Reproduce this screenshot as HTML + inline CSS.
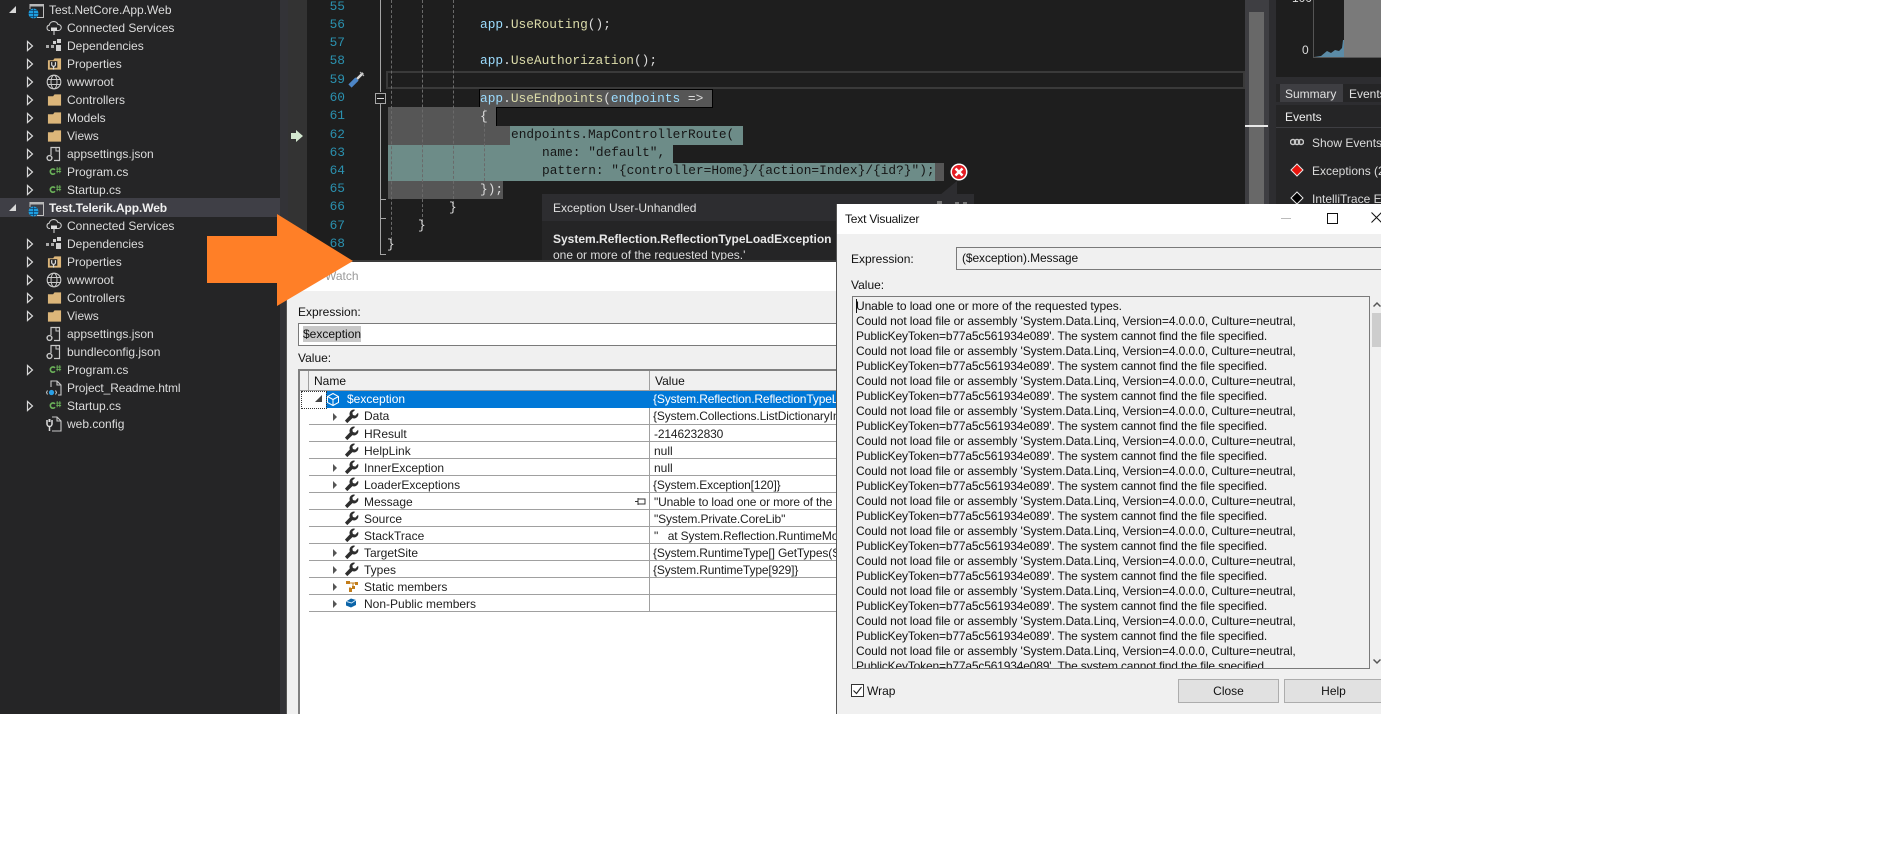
<!DOCTYPE html>
<html><head><meta charset="utf-8"><style>
html,body{margin:0;padding:0;background:#fff;width:1888px;height:854px;overflow:hidden}
#root{position:absolute;left:0;top:0;width:1381px;height:714px;overflow:hidden;background:#1e1e1e;font-family:"Liberation Sans",sans-serif;font-size:12px}
.a{position:absolute}
.t{position:absolute;white-space:pre;line-height:16px;height:16px}
.s{color:#dcdcdc}
.c{position:absolute;white-space:pre;font-family:"Liberation Mono",monospace;font-size:12.83px;line-height:18px;height:18px;color:#dcdcdc}
.n{position:absolute;left:315px;width:30px;text-align:right;font-family:"Liberation Mono",monospace;font-size:12.83px;line-height:18px;color:#2b91af}
.b{color:#9cdcfe}.y{color:#dcdcaa}.k{color:#161616}
.i{position:absolute}
.d{color:#1e1e1e}
.w{letter-spacing:-.14px}
.v{position:absolute;left:856px;white-space:pre;line-height:15px;color:#111;font-size:12px}
.v:nth-child(odd){letter-spacing:-.09px}
.v:nth-child(even){letter-spacing:-.17px}
.g{position:absolute;left:309px;width:527px;height:16px;border-bottom:1px solid #a0a0a0}
.dash{position:absolute;top:0;width:0;border-left:1px dashed #6a6a6a}
</style></head><body>
<svg width="0" height="0" style="position:absolute"><defs>
<symbol id="ex" viewBox="0 0 8 12"><path d="M1.500 1.500L6.500 6 1.500 10.500z" fill="none" stroke="#d8d8d8" stroke-width="1.200"/></symbol>
<symbol id="folder" viewBox="0 0 16 14"><path d="M1 3V13H15V1H8L6.500 3z" fill="#dcb67a"/></symbol>
<symbol id="prop" viewBox="0 0 16 14"><path d="M1 3V13H15V1H8L6.500 3z" fill="#dcb67a"/><path d="M3 4h8v7H3z" fill="#252526"/><path d="M5 5v2.500a2 2 0 0 0 4 0V5M7 9v4" fill="none" stroke="#ddd" stroke-width="1.300"/></symbol>
<symbol id="cs" viewBox="0 0 16 12"><path d="M8 4.200A3 3 0 1 0 8 8" fill="none" stroke="#6cb35a" stroke-width="1.800"/><path d="M10.500 1v7M13.500 1v7M9.500 3.200h5.500M9.500 6h5.500" stroke="#6cb35a" stroke-width="1"/></symbol>
<symbol id="json" viewBox="0 0 16 16"><path d="M5 9V1.500h9M13.500 1.500V14.500H8" fill="none" stroke="#c8c8c8" stroke-width="1.200"/><circle cx="3.500" cy="12" r="2.400" fill="none" stroke="#c8c8c8" stroke-width="1.400"/><path d="M10 2v3h4" fill="none" stroke="#c8c8c8"/></symbol>
<symbol id="globe" viewBox="0 0 16 16"><circle cx="8" cy="8" r="6.800" fill="none" stroke="#c8c8c8" stroke-width="1.100"/><ellipse cx="8" cy="8" rx="3" ry="6.800" fill="none" stroke="#c8c8c8"/><path d="M1 5.500h14M1 10.500h14" stroke="#c8c8c8"/></symbol>
<symbol id="cloud" viewBox="0 0 16 14"><path d="M4 9.500H3.200a2.700 2.700 0 0 1 0-5.300 4.600 4.600 0 0 1 8.800-.7 3 3 0 0 1 .5 6H11" fill="none" stroke="#c8c8c8" stroke-width="1.100"/><path d="M5.500 7h5v2.500h-5zM8 9.500V14" fill="#ddd" stroke="#ddd"/></symbol>
<symbol id="deps" viewBox="0 0 16 14"><path d="M0 6h3v3H0zM5 6h3v3H5z" fill="#aaa"/><path d="M7 2h3v3H7zM11 0h4v4h-4zM10 6h5v6h-5z" fill="#d0d0d0"/></symbol>
<symbol id="proj" viewBox="0 0 16 16"><path d="M2 6V1.500H15.500V14.500H9" fill="none" stroke="#c0c0c0" stroke-width="1"/><path d="M2 1h14v2.500H2z" fill="#b8b8b8"/><circle cx="5.500" cy="10.500" r="5" fill="#1e9fe0"/><path d="M.5 10.500h10M5.500 5.500v10M2 7.500h7M2 13.500h7" stroke="#10406a" stroke-width=".8"/></symbol>
<symbol id="html" viewBox="0 0 16 16"><path d="M5 7V1h6l4 4v10H12M11 1v4h4" fill="none" stroke="#c8c8c8" stroke-width="1.100"/><circle cx="5.500" cy="12.500" r="2.600" fill="#29a0e6"/><path d="M1.500 10.500l-1 2 1 2M9.500 10.500l1 2-1 2" stroke="#c8c8c8" fill="none"/></symbol>
<symbol id="cfg" viewBox="0 0 16 16"><path d="M6 1h5l4 4v10H6M11 1v4h4" fill="none" stroke="#c8c8c8" stroke-width="1.100"/><path d="M1 4v4a2.500 2.500 0 0 0 5 0V4M3.500 10v5" fill="none" stroke="#ddd" stroke-width="1.500"/><path d="M2.500 6h2V3h-2z" fill="#ddd"/></symbol>
<symbol id="wr" viewBox="0 0 16 16"><path d="M15 4l-3 3-2.500-.6L8.900 3.900l3-3A4.500 4.500 0 0 0 6.200 6.800L1 12.400 3.500 15l5.500-5.300A4.500 4.500 0 0 0 15 4z" fill="#2e2e2e"/></symbol>
<symbol id="tri" viewBox="0 0 8 12"><path d="M2 2L6 6 2 10z" fill="#555"/></symbol>
</defs></svg>
<div id="root">
<!-- sidebar -->
<div class="a" style="left:0;top:0;width:280px;height:714px;background:#252526"></div>
<div class="a" style="left:280px;top:0;width:8px;height:714px;background:#333337"></div>
<div class="a" style="left:288px;top:0;width:19px;height:714px;background:#333333"></div>
<div class="a" style="left:0;top:198px;width:280px;height:19px;background:#3f3f46"></div>

<svg class="i" style="left:8px;top:5px" width="10" height="10"><path d="M8 1V8H1z" fill="#d8d8d8"/></svg>
<svg class="i" style="left:28px;top:3px" width="16" height="16"><use href="#proj"/></svg><div class="t" style="left:49px;top:2px;color:#dcdcdc;font-size:12px">Test.NetCore.App.Web</div>
<svg class="i" style="left:46px;top:21px" width="16" height="14"><use href="#cloud"/></svg><div class="t s" style="left:67px;top:20px">Connected Services</div>
<svg class="i" style="left:26px;top:40px" width="8" height="12"><use href="#ex"/></svg><svg class="i" style="left:46px;top:39px" width="16" height="14"><use href="#deps"/></svg><div class="t s" style="left:67px;top:38px">Dependencies</div>
<svg class="i" style="left:26px;top:58px" width="8" height="12"><use href="#ex"/></svg><svg class="i" style="left:47px;top:57px" width="15" height="14"><use href="#prop"/></svg><div class="t s" style="left:67px;top:56px">Properties</div>
<svg class="i" style="left:26px;top:76px" width="8" height="12"><use href="#ex"/></svg><svg class="i" style="left:46px;top:74px" width="16" height="16"><use href="#globe"/></svg><div class="t s" style="left:67px;top:74px">wwwroot</div>
<svg class="i" style="left:26px;top:94px" width="8" height="12"><use href="#ex"/></svg><svg class="i" style="left:47px;top:93px" width="15" height="14"><use href="#folder"/></svg><div class="t s" style="left:67px;top:92px">Controllers</div>
<svg class="i" style="left:26px;top:112px" width="8" height="12"><use href="#ex"/></svg><svg class="i" style="left:47px;top:111px" width="15" height="14"><use href="#folder"/></svg><div class="t s" style="left:67px;top:110px">Models</div>
<svg class="i" style="left:26px;top:130px" width="8" height="12"><use href="#ex"/></svg><svg class="i" style="left:47px;top:129px" width="15" height="14"><use href="#folder"/></svg><div class="t s" style="left:67px;top:128px">Views</div>
<svg class="i" style="left:26px;top:148px" width="8" height="12"><use href="#ex"/></svg><svg class="i" style="left:46px;top:146px" width="16" height="16"><use href="#json"/></svg><div class="t s" style="left:67px;top:146px">appsettings.json</div>
<svg class="i" style="left:26px;top:166px" width="8" height="12"><use href="#ex"/></svg><svg class="i" style="left:48px;top:166px" width="14" height="11"><use href="#cs"/></svg><div class="t s" style="left:67px;top:164px">Program.cs</div>
<svg class="i" style="left:26px;top:184px" width="8" height="12"><use href="#ex"/></svg><svg class="i" style="left:48px;top:184px" width="14" height="11"><use href="#cs"/></svg><div class="t s" style="left:67px;top:182px">Startup.cs</div>

<svg class="i" style="left:8px;top:203px" width="10" height="10"><path d="M8 1V8H1z" fill="#d8d8d8"/></svg>
<svg class="i" style="left:28px;top:201px" width="16" height="16"><use href="#proj"/></svg><div class="t" style="left:49px;top:200px;color:#f0f0f0;font-weight:bold;font-size:12px;letter-spacing:-.1px">Test.Telerik.App.Web</div>
<svg class="i" style="left:46px;top:219px" width="16" height="14"><use href="#cloud"/></svg><div class="t s" style="left:67px;top:218px">Connected Services</div>
<svg class="i" style="left:26px;top:238px" width="8" height="12"><use href="#ex"/></svg><svg class="i" style="left:46px;top:237px" width="16" height="14"><use href="#deps"/></svg><div class="t s" style="left:67px;top:236px">Dependencies</div>
<svg class="i" style="left:26px;top:256px" width="8" height="12"><use href="#ex"/></svg><svg class="i" style="left:47px;top:255px" width="15" height="14"><use href="#prop"/></svg><div class="t s" style="left:67px;top:254px">Properties</div>
<svg class="i" style="left:26px;top:274px" width="8" height="12"><use href="#ex"/></svg><svg class="i" style="left:46px;top:272px" width="16" height="16"><use href="#globe"/></svg><div class="t s" style="left:67px;top:272px">wwwroot</div>
<svg class="i" style="left:26px;top:292px" width="8" height="12"><use href="#ex"/></svg><svg class="i" style="left:47px;top:291px" width="15" height="14"><use href="#folder"/></svg><div class="t s" style="left:67px;top:290px">Controllers</div>
<svg class="i" style="left:26px;top:310px" width="8" height="12"><use href="#ex"/></svg><svg class="i" style="left:47px;top:309px" width="15" height="14"><use href="#folder"/></svg><div class="t s" style="left:67px;top:308px">Views</div>
<svg class="i" style="left:46px;top:326px" width="16" height="16"><use href="#json"/></svg><div class="t s" style="left:67px;top:326px">appsettings.json</div>
<svg class="i" style="left:46px;top:344px" width="16" height="16"><use href="#json"/></svg><div class="t s" style="left:67px;top:344px">bundleconfig.json</div>
<svg class="i" style="left:26px;top:364px" width="8" height="12"><use href="#ex"/></svg><svg class="i" style="left:48px;top:364px" width="14" height="11"><use href="#cs"/></svg><div class="t s" style="left:67px;top:362px">Program.cs</div>
<svg class="i" style="left:46px;top:380px" width="16" height="16"><use href="#html"/></svg><div class="t s" style="left:67px;top:380px;letter-spacing:-.1px">Project_Readme.html</div>
<svg class="i" style="left:26px;top:400px" width="8" height="12"><use href="#ex"/></svg><svg class="i" style="left:48px;top:400px" width="14" height="11"><use href="#cs"/></svg><div class="t s" style="left:67px;top:398px">Startup.cs</div>
<svg class="i" style="left:46px;top:416px" width="16" height="16"><use href="#cfg"/></svg><div class="t s" style="left:67px;top:416px">web.config</div>

<!-- line numbers -->
<div class="n" style="top:-2px">55</div><div class="n" style="top:16px">56</div><div class="n" style="top:34px">57</div><div class="n" style="top:52px">58</div><div class="n" style="top:71px">59</div><div class="n" style="top:89px">60</div><div class="n" style="top:107px">61</div><div class="n" style="top:126px">62</div><div class="n" style="top:144px">63</div><div class="n" style="top:162px">64</div><div class="n" style="top:180px">65</div><div class="n" style="top:198px">66</div><div class="n" style="top:217px">67</div><div class="n" style="top:235px">68</div>

<!-- current line box -->
<div class="a" style="left:386px;top:71px;width:855px;height:14px;border:2px solid #3a3a3a"></div>
<!-- selection -->
<div class="a" style="left:480px;top:90px;width:232px;height:17px;background:#565656;outline:1px solid #000"></div>
<div class="a" style="left:496px;top:107px;width:1px;height:19px;background:#000"></div>
<div class="a" style="left:388px;top:107px;width:108px;height:19px;background:#565656"></div>
<div class="a" style="left:388px;top:126px;width:122px;height:19px;background:#565656"></div>
<div class="a" style="left:510px;top:126px;width:233px;height:19px;background:#6d8c88"></div>
<div class="a" style="left:388px;top:145px;width:285px;height:18px;background:#6d8c88"></div>
<div class="a" style="left:388px;top:163px;width:547px;height:18px;background:#6d8c88"></div>
<div class="a" style="left:935px;top:163px;width:9px;height:18px;background:#565656"></div>
<div class="a" style="left:388px;top:181px;width:115px;height:18px;background:#565656"></div>
<!-- guides -->
<div class="a" style="left:380px;top:0;width:1px;height:92px;background:#a5a5a5"></div>
<div class="a" style="left:380px;top:104px;width:1px;height:151px;background:#a5a5a5"></div>
<div class="a" style="left:381px;top:199px;width:5px;height:1px;background:#a5a5a5"></div>
<div class="a" style="left:381px;top:218px;width:5px;height:1px;background:#a5a5a5"></div>
<div class="a" style="left:381px;top:254px;width:5px;height:1px;background:#a5a5a5"></div>
<div class="dash" style="left:391px;height:240px"></div>
<div class="dash" style="left:422px;height:222px"></div>
<div class="dash" style="left:453px;height:204px"></div>
<div class="dash" style="left:484px;top:109px;height:72px"></div>
<div class="a" style="left:375px;top:93px;width:9px;height:9px;border:1px solid #a5a5a5;background:#1e1e1e"></div>
<div class="a" style="left:377px;top:98px;width:7px;height:1px;background:#ddd"></div>
<!-- screwdriver icon -->
<svg class="i" style="left:346px;top:71px" width="19" height="18"><path d="M17 2l-6 6" stroke="#d8d8d8" stroke-width="2.500"/><path d="M11 8L4 15" stroke="#4d86c7" stroke-width="4.500"/><path d="M14 1l4 4" stroke="#bbb"/></svg>
<!-- step arrow -->
<svg class="i" style="left:290px;top:129px" width="14" height="14"><path d="M1 4H6V1L13 7 6 13V10H1z" fill="#d4e8d0"/></svg>
<!-- code -->
<div class="c" style="left:480px;top:16px"><span class="b">app</span>.<span class="y">UseRouting</span>();</div>
<div class="c" style="left:480px;top:52px"><span class="b">app</span>.<span class="y">UseAuthorization</span>();</div>
<div class="c" style="left:480px;top:90px"><span class="b">app</span>.<span class="y">UseEndpoints</span>(<span class="b">endpoints</span> =&gt;</div>
<div class="c" style="left:480px;top:108px">{</div>
<div class="c k" style="left:511px;top:126px">endpoints.MapControllerRoute(</div>
<div class="c k" style="left:542px;top:144px">name: "default",</div>
<div class="c k" style="left:542px;top:162px">pattern: "{controller=Home}/{action=Index}/{id?}");</div>
<div class="c" style="left:480px;top:181px">});</div>
<div class="c" style="left:449px;top:199px">}</div>
<div class="c" style="left:418px;top:217px">}</div>
<div class="c" style="left:387px;top:236px">}</div>
<!-- error -->
<svg class="i" style="left:950px;top:163px" width="18" height="18"><circle cx="9" cy="9" r="8.500" fill="#fff"/><circle cx="9" cy="9" r="7" fill="#e51c23"/><path d="M5.500 5.500l7 7M12.500 5.500l-7 7" stroke="#fff" stroke-width="2.500"/></svg>
<!-- popup -->
<svg class="i" style="left:940px;top:180px" width="20" height="16"><path d="M0 15L17 1V15z" fill="#2d2d30"/></svg>
<div class="a" style="left:542px;top:194px;width:432px;height:27px;background:#2d2d30"></div>
<div class="a" style="left:542px;top:221px;width:432px;height:40px;background:#252526"></div>
<div class="t" style="left:553px;top:200px;color:#e0e0e0">Exception User-Unhandled</div>
<div class="t" style="left:553px;top:231px;color:#e8e8e8;font-weight:bold">System.Reflection.ReflectionTypeLoadException</div>
<div class="t" style="left:553px;top:247px;color:#dcdcdc">one or more of the requested types.'</div>
<div class="a" style="left:937px;top:201px;width:5px;height:3px;background:#777"></div>
<div class="a" style="left:955px;top:202px;width:4px;height:2px;background:#777"></div>
<div class="a" style="left:963px;top:202px;width:4px;height:2px;background:#777"></div>
<!-- scrollbar -->
<div class="a" style="left:1245px;top:0;width:24px;height:261px;background:#3e3e42"></div>
<div class="a" style="left:1249px;top:12px;width:15px;height:192px;background:#686868"></div>
<div class="a" style="left:1245px;top:125px;width:23px;height:2px;background:#e8e8e8"></div>
<div class="a" style="left:1269px;top:0;width:7px;height:261px;background:#2d2d30"></div>
<!-- right panel -->
<div class="a" style="left:1276px;top:0;width:105px;height:261px;background:#252526"></div>
<div class="a" style="left:1276px;top:0;width:105px;height:77px;background:#1e1e1e"></div>
<div class="a" style="left:1276px;top:77px;width:105px;height:7px;background:#2d2d30"></div>
<div class="a" style="left:1276px;top:102px;width:105px;height:3px;background:#2d2d30"></div>
<div class="a" style="left:1276px;top:127px;width:105px;height:1px;background:#3e3e42"></div>
<div class="a" style="left:1313px;top:0;width:1px;height:58px;background:#555"></div>
<div class="a" style="left:1313px;top:57px;width:68px;height:1px;background:#555"></div>
<div class="a" style="left:1344px;top:0;width:37px;height:57px;background:#7a7a7a"></div>
<svg class="i" style="left:1314px;top:38px" width="30" height="19"><path d="M0 19L7 18 13 13 17 15 21 12 25 13 28 10 29 2 30 2V19z" fill="#5b8ba6"/></svg>
<div class="t" style="left:1302px;top:42px;color:#dcdcdc">0</div>
<div class="t" style="left:1292px;top:-10px;color:#dcdcdc">100</div>
<div class="a" style="left:1280px;top:84px;width:63px;height:18px;background:#3e3e42"></div>
<div class="t" style="left:1285px;top:86px;color:#e0e0e0">Summary</div>
<div class="t" style="left:1349px;top:86px;color:#e0e0e0">Events</div>
<div class="t" style="left:1285px;top:109px;color:#f0f0f0">Events</div>
<svg class="i" style="left:1290px;top:137px" width="14" height="10"><circle cx="3" cy="5" r="2.500" fill="none" stroke="#c8c8c8" stroke-width="1.500"/><circle cx="7" cy="5" r="2.500" fill="none" stroke="#c8c8c8" stroke-width="1.500"/><circle cx="11" cy="5" r="2.500" fill="none" stroke="#c8c8c8" stroke-width="1.500"/></svg>
<div class="t s" style="left:1312px;top:135px">Show Events</div>
<svg class="i" style="left:1290px;top:163px" width="14" height="14"><path d="M7 1L13 7 7 13 1 7z" fill="#e8140c" stroke="#e8e8e8"/></svg>
<div class="t s" style="left:1312px;top:163px">Exceptions (2)</div>
<svg class="i" style="left:1290px;top:191px" width="14" height="14"><path d="M7 1L13 7 7 13 1 7z" fill="#000" stroke="#e8e8e8"/></svg>
<div class="t s" style="left:1312px;top:191px">IntelliTrace Events</div>

<!-- Watch dialog -->
<div class="a" style="left:286px;top:260px;width:551px;height:2px;background:#3a3a3a"></div>
<div class="a" style="left:287px;top:262px;width:550px;height:29px;background:#fff"></div>
<div class="a" style="left:287px;top:291px;width:550px;height:423px;background:#f0f0f0"></div>
<div class="a" style="left:286px;top:262px;width:1px;height:452px;background:#555"></div>
<div class="t" style="left:325px;top:268px;color:#9a9a9a">Watch</div>
<div class="t" style="left:298px;top:304px;color:#111">Expression:</div>
<div class="a" style="left:298px;top:323px;width:538px;height:21px;background:#fff;border:1px solid #7a7a7a;border-right:0"></div>
<div class="a" style="left:303px;top:326px;width:58px;height:16px;background:#c8c8c8"></div>
<div class="t" style="left:303px;top:326px;color:#111">$exception</div>
<div class="t" style="left:298px;top:350px;color:#111">Value:</div>
<div class="a" style="left:298px;top:369px;width:538px;height:345px;background:#fff;border:2px solid #808080;border-right:0;border-bottom:0;box-sizing:border-box"></div>
<div class="a" style="left:300px;top:371px;width:536px;height:19px;background:#f0f0f0;border-bottom:1px solid #a0a0a0"></div>
<div class="a" style="left:308px;top:371px;width:1px;height:19px;background:#a0a0a0"></div>
<div class="a" style="left:649px;top:371px;width:1px;height:241px;background:#a0a0a0"></div>
<div class="t" style="left:314px;top:373px;color:#111">Name</div>
<div class="t" style="left:655px;top:373px;color:#111">Value</div>
<div class="a" style="left:326px;top:391px;width:510px;height:17px;background:#0078d7"></div>
<div class="a" style="left:301px;top:391px;width:24px;height:16px;border:1px dotted #333"></div>
<svg class="i" style="left:314px;top:394px" width="10" height="10"><path d="M8 1V8H1z" fill="#444"/></svg>
<svg class="i" style="left:326px;top:392px" width="14" height="15"><path d="M7 1.500L12.500 4.500V10.500L7 13.500 1.500 10.500V4.500zM1.500 4.500L7 7.500 12.500 4.500M7 7.500V13.500" fill="none" stroke="#fff" stroke-width="1"/></svg>
<div class="t" style="left:347px;top:391px;color:#fff">$exception</div>
<div class="t w" style="left:653px;top:391px;color:#fff">{System.Reflection.ReflectionTypeLoadException}</div>

<div class="g" style="top:408px"></div><div class="g" style="top:425px"></div><div class="g" style="top:442px"></div><div class="g" style="top:459px"></div><div class="g" style="top:476px"></div><div class="g" style="top:493px"></div><div class="g" style="top:510px"></div><div class="g" style="top:527px"></div><div class="g" style="top:544px"></div><div class="g" style="top:561px"></div><div class="g" style="top:578px"></div><div class="g" style="top:595px"></div>

<svg class="i" style="left:331px;top:411px" width="8" height="12"><use href="#tri"/></svg><svg class="i" style="left:344px;top:409px" width="15" height="15"><use href="#wr"/></svg><div class="t d" style="left:364px;top:408px">Data</div><div class="t d w" style="left:653px;top:408px">{System.Collections.ListDictionaryInternal}</div>
<svg class="i" style="left:344px;top:426px" width="15" height="15"><use href="#wr"/></svg><div class="t d" style="left:364px;top:426px">HResult</div><div class="t d w" style="left:654px;top:426px">-2146232830</div>
<svg class="i" style="left:344px;top:443px" width="15" height="15"><use href="#wr"/></svg><div class="t d" style="left:364px;top:443px">HelpLink</div><div class="t d" style="left:654px;top:443px">null</div>
<svg class="i" style="left:331px;top:462px" width="8" height="12"><use href="#tri"/></svg><svg class="i" style="left:344px;top:460px" width="15" height="15"><use href="#wr"/></svg><div class="t d" style="left:364px;top:460px">InnerException</div><div class="t d" style="left:654px;top:460px">null</div>
<svg class="i" style="left:331px;top:479px" width="8" height="12"><use href="#tri"/></svg><svg class="i" style="left:344px;top:477px" width="15" height="15"><use href="#wr"/></svg><div class="t d" style="left:364px;top:477px">LoaderExceptions</div><div class="t d w" style="left:653px;top:477px">{System.Exception[120]}</div>
<svg class="i" style="left:344px;top:494px" width="15" height="15"><use href="#wr"/></svg><div class="t d" style="left:364px;top:494px">Message</div><div class="t d w" style="left:654px;top:494px">"Unable to load one or more of the requested types.</div>
<svg class="i" style="left:635px;top:497px" width="11" height="9"><path d="M0 4.500H3M3 2h7v5H3zM3 1v7" fill="none" stroke="#333"/></svg>
<svg class="i" style="left:344px;top:511px" width="15" height="15"><use href="#wr"/></svg><div class="t d" style="left:364px;top:511px">Source</div><div class="t d w" style="left:654px;top:511px">"System.Private.CoreLib"</div>
<svg class="i" style="left:344px;top:528px" width="15" height="15"><use href="#wr"/></svg><div class="t d" style="left:364px;top:528px">StackTrace</div><div class="t d w" style="left:654px;top:528px">"   at System.Reflection.RuntimeModule.GetTypes</div>
<svg class="i" style="left:331px;top:547px" width="8" height="12"><use href="#tri"/></svg><svg class="i" style="left:344px;top:545px" width="15" height="15"><use href="#wr"/></svg><div class="t d" style="left:364px;top:545px">TargetSite</div><div class="t d w" style="left:653px;top:545px">{System.RuntimeType[] GetTypes(System.Reflection</div>
<svg class="i" style="left:331px;top:564px" width="8" height="12"><use href="#tri"/></svg><svg class="i" style="left:344px;top:562px" width="15" height="15"><use href="#wr"/></svg><div class="t d" style="left:364px;top:562px">Types</div><div class="t d w" style="left:653px;top:562px">{System.RuntimeType[929]}</div>
<svg class="i" style="left:331px;top:581px" width="8" height="12"><use href="#tri"/></svg><svg class="i" style="left:345px;top:579px" width="15" height="15"><path d="M1 2h4v3H1zM7 7h3v3H7zM10 3h3v3h-3zM4 9h3v4H4z" fill="#c27d1a"/><path d="M5 4h5M8 4v5M5 8v2" stroke="#c27d1a"/></svg><div class="t d" style="left:364px;top:579px">Static members</div>
<svg class="i" style="left:331px;top:598px" width="8" height="12"><use href="#tri"/></svg><svg class="i" style="left:345px;top:597px" width="12" height="11"><path d="M1 4.500L6 1.500 11 3V8L6 10.500 1 8.500z" fill="#0b64a8"/><path d="M1.500 4.500L6.500 6 11 3" stroke="#cfe4f5" fill="none"/></svg><div class="t d" style="left:364px;top:596px">Non-Public members</div>

<!-- Arrow -->
<svg class="i" style="left:0;top:0" width="400" height="320"><path d="M207 236H277V214L353 261 277 306V283H207z" fill="#ff7f27"/></svg>

<!-- Text Visualizer -->
<div class="a" style="left:837px;top:204px;width:544px;height:30px;background:#fff"></div>
<div class="a" style="left:837px;top:234px;width:544px;height:480px;background:#f0f0f0"></div>
<div class="a" style="left:836px;top:204px;width:1px;height:510px;background:#555"></div>
<div class="t" style="left:845px;top:211px;color:#111;letter-spacing:-.2px">Text Visualizer</div>
<div class="a" style="left:1281px;top:218px;width:10px;height:1px;background:#bbb"></div>
<div class="a" style="left:1327px;top:213px;width:9px;height:9px;border:1px solid #111"></div>
<svg class="i" style="left:1371px;top:212px" width="10" height="11"><path d="M.5.500l10 10M10.500.500l-10 10" stroke="#111" fill="none"/></svg>
<div class="t" style="left:851px;top:251px;color:#111">Expression:</div>
<div class="a" style="left:956px;top:247px;width:425px;height:21px;border:1px solid #7a7a7a;border-right:0;background:#f0f0f0"></div>
<div class="t" style="left:962px;top:250px;color:#111;letter-spacing:-.1px">($exception).Message</div>
<div class="t" style="left:851px;top:277px;color:#111">Value:</div>
<div class="a" id="ta" style="left:852px;top:296px;width:516px;height:371px;border:1px solid #7a7a7a;overflow:hidden;background:#f0f0f0"></div>
<div class="a" style="left:853px;top:297px;width:516px;height:371px;overflow:hidden">
<div style="position:relative;left:-853px;top:-297px">
<div class="a" style="left:856px;top:299px;width:1px;height:14px;background:#111"></div>
<div class="v" style="top:299px;letter-spacing:-.1px">Unable to load one or more of the requested types.</div>
<div class="v" style="top:314px">Could not load file or assembly 'System.Data.Linq, Version=4.0.0.0, Culture=neutral,</div>
<div class="v" style="top:329px">PublicKeyToken=b77a5c561934e089'. The system cannot find the file specified.</div>
<div class="v" style="top:344px">Could not load file or assembly 'System.Data.Linq, Version=4.0.0.0, Culture=neutral,</div>
<div class="v" style="top:359px">PublicKeyToken=b77a5c561934e089'. The system cannot find the file specified.</div>
<div class="v" style="top:374px">Could not load file or assembly 'System.Data.Linq, Version=4.0.0.0, Culture=neutral,</div>
<div class="v" style="top:389px">PublicKeyToken=b77a5c561934e089'. The system cannot find the file specified.</div>
<div class="v" style="top:404px">Could not load file or assembly 'System.Data.Linq, Version=4.0.0.0, Culture=neutral,</div>
<div class="v" style="top:419px">PublicKeyToken=b77a5c561934e089'. The system cannot find the file specified.</div>
<div class="v" style="top:434px">Could not load file or assembly 'System.Data.Linq, Version=4.0.0.0, Culture=neutral,</div>
<div class="v" style="top:449px">PublicKeyToken=b77a5c561934e089'. The system cannot find the file specified.</div>
<div class="v" style="top:464px">Could not load file or assembly 'System.Data.Linq, Version=4.0.0.0, Culture=neutral,</div>
<div class="v" style="top:479px">PublicKeyToken=b77a5c561934e089'. The system cannot find the file specified.</div>
<div class="v" style="top:494px">Could not load file or assembly 'System.Data.Linq, Version=4.0.0.0, Culture=neutral,</div>
<div class="v" style="top:509px">PublicKeyToken=b77a5c561934e089'. The system cannot find the file specified.</div>
<div class="v" style="top:524px">Could not load file or assembly 'System.Data.Linq, Version=4.0.0.0, Culture=neutral,</div>
<div class="v" style="top:539px">PublicKeyToken=b77a5c561934e089'. The system cannot find the file specified.</div>
<div class="v" style="top:554px">Could not load file or assembly 'System.Data.Linq, Version=4.0.0.0, Culture=neutral,</div>
<div class="v" style="top:569px">PublicKeyToken=b77a5c561934e089'. The system cannot find the file specified.</div>
<div class="v" style="top:584px">Could not load file or assembly 'System.Data.Linq, Version=4.0.0.0, Culture=neutral,</div>
<div class="v" style="top:599px">PublicKeyToken=b77a5c561934e089'. The system cannot find the file specified.</div>
<div class="v" style="top:614px">Could not load file or assembly 'System.Data.Linq, Version=4.0.0.0, Culture=neutral,</div>
<div class="v" style="top:629px">PublicKeyToken=b77a5c561934e089'. The system cannot find the file specified.</div>
<div class="v" style="top:644px">Could not load file or assembly 'System.Data.Linq, Version=4.0.0.0, Culture=neutral,</div>
<div class="v" style="top:659px">PublicKeyToken=b77a5c561934e089'. The system cannot find the file specified.</div>
</div></div>
<svg class="i" style="left:1373px;top:301px" width="8" height="7"><path d="M.5 5.500L4 2 7.500 5.500" fill="none" stroke="#555" stroke-width="1.500"/></svg>
<div class="a" style="left:1372px;top:313px;width:9px;height:34px;background:#cdcdcd"></div>
<svg class="i" style="left:1373px;top:658px" width="8" height="7"><path d="M.5 1.500L4 5 7.500 1.500" fill="none" stroke="#555" stroke-width="1.500"/></svg>
<div class="a" style="left:851px;top:684px;width:11px;height:11px;border:1px solid #333;background:#fff"></div>
<svg class="i" style="left:852px;top:685px" width="11" height="11"><path d="M1.500 5.500L4.500 8.500 9.500 2" fill="none" stroke="#222" stroke-width="1.100"/></svg>
<div class="t" style="left:867px;top:683px;color:#111">Wrap</div>
<div class="a" style="left:1178px;top:679px;width:99px;height:22px;background:#e1e1e1;border:1px solid #adadad;text-align:center;line-height:22px;color:#111">Close</div>
<div class="a" style="left:1284px;top:679px;width:97px;height:22px;background:#e1e1e1;border:1px solid #adadad;border-right:0;text-align:center;line-height:22px;color:#111">Help</div>
</div>
</body></html>
